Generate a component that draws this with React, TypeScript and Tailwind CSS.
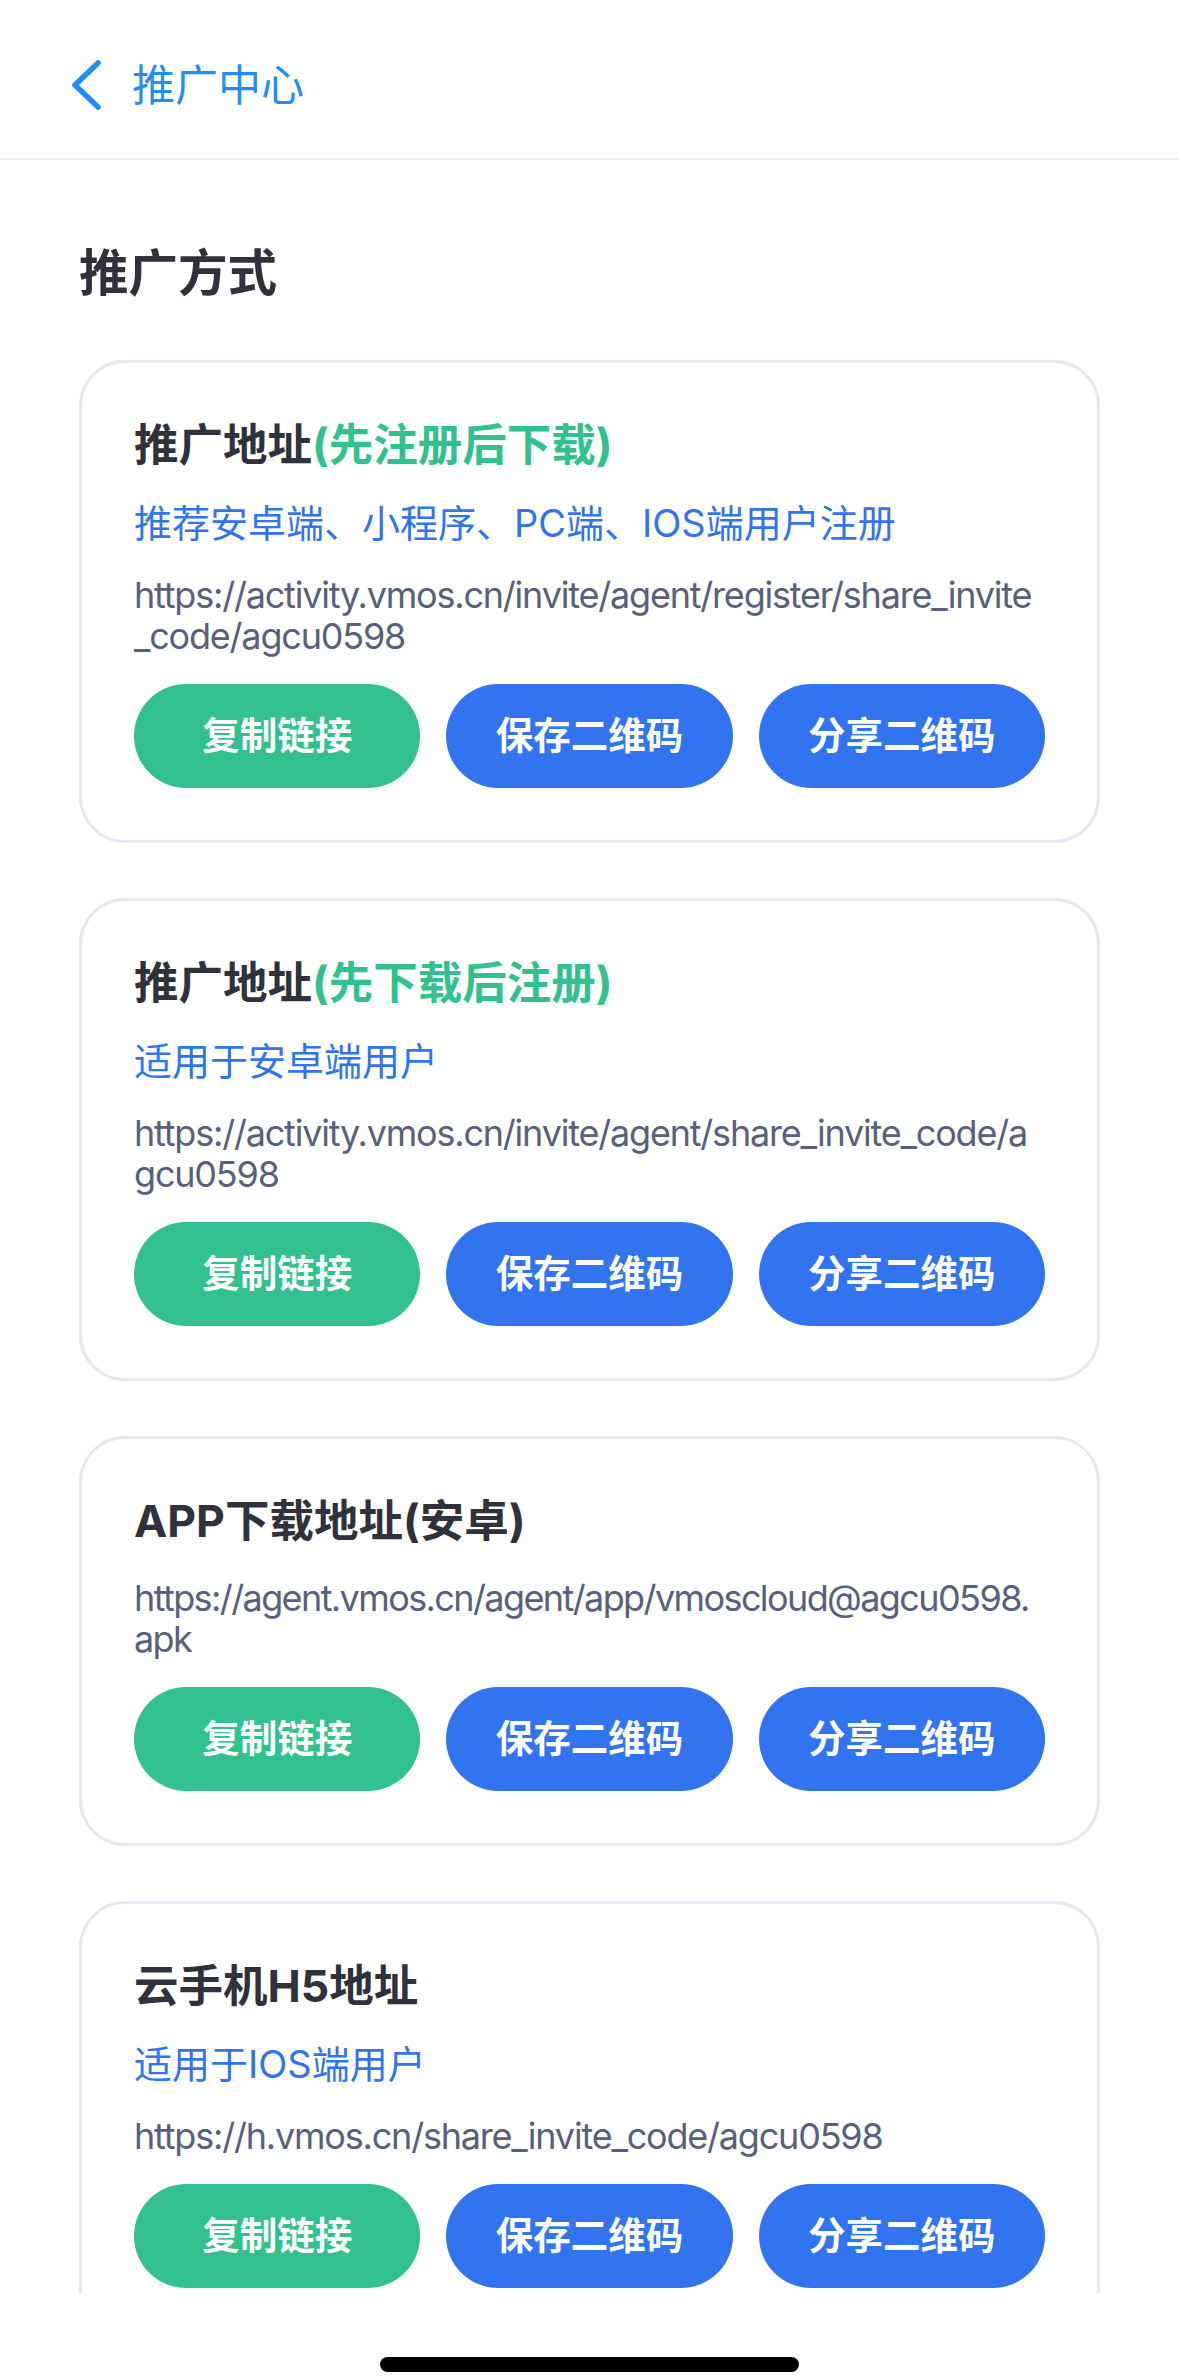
import React from 'react'

type Item = {
  title: string
  tag?: string
  desc?: string
  url: string
  tight?: boolean
}

const items: Item[] = [
  {
    title: '推广地址',
    tag: '(先注册后下载)',
    desc: '推荐安卓端、小程序、PC端、IOS端用户注册',
    url: 'https://activity.vmos.cn/invite/agent/register/share_invite_code/agcu0598',
  },
  {
    title: '推广地址',
    tag: '(先下载后注册)',
    desc: '适用于安卓端用户',
    url: 'https://activity.vmos.cn/invite/agent/share_invite_code/agcu0598',
  },
  {
    title: 'APP下载地址(安卓)',
    url: 'https://agent.vmos.cn/agent/app/vmoscloud@agcu0598.apk',
    tight: true,
  },
  {
    title: '云手机H5地址',
    desc: '适用于IOS端用户',
    url: 'https://h.vmos.cn/share_invite_code/agcu0598',
  },
]

function ActionButton({ label, green }: { label: string; green?: boolean }) {
  return (
    <button
      className={`flex h-[104px] items-center justify-center rounded-full text-[37.5px] font-bold text-white ${
        green ? 'bg-[#32c08e]' : 'bg-[#3273f0]'
      }`}
    >
      {label}
    </button>
  )
}

function PromoCard({ item }: { item: Item }) {
  return (
    <div className="rounded-[46px] border-[3px] border-[#e6e8f2] bg-white p-[52px]">
      <h3 className="text-[44.5px] leading-[60px] font-bold text-[#30313b]">
        {item.title}
        {item.tag && <span className="text-[#32c08e]">{item.tag}</span>}
      </h3>
      {item.desc && (
        <p className="mt-[23px] text-[38px] leading-[50px] text-[#3273f0]">{item.desc}</p>
      )}
      <p
        className={`mt-[27px] text-[36px] leading-[41px] break-all text-[#596079] ${
          item.tight ? 'tracking-[-1.6px]' : 'tracking-[-1.2px]'
        }`}
      >
        {item.url}
      </p>
      <div className="mt-[27px] grid grid-cols-3 gap-[26px]">
        <ActionButton label="复制链接" green />
        <ActionButton label="保存二维码" />
        <ActionButton label="分享二维码" />
      </div>
    </div>
  )
}

export default function App() {
  return (
    <div className="flex h-[2377px] w-full flex-col overflow-hidden bg-white font-[Inter,'Noto_Sans_CJK_SC',sans-serif]">
      {/* Nav bar */}
      <header className="flex h-[160px] shrink-0 items-center border-b-2 border-[#ededf3] pt-[12px] pl-[72px]">
        <svg width="30" height="50" viewBox="0 0 30 50" fill="none">
          <path
            d="M26 3 L3 25 L26 47"
            stroke="#1f8ef9"
            strokeWidth="5.5"
            strokeLinecap="round"
            strokeLinejoin="round"
          />
        </svg>
        <span className="ml-[30px] text-[43px] text-[#1f8ef9]">推广中心</span>
      </header>

      {/* Content */}
      <main className="flex-1 overflow-hidden px-[79px] pt-[80px]">
        <h2 className="mb-[53px] text-[49.5px] leading-[67px] font-bold text-[#30313b]">推广方式</h2>
        <div className="flex flex-col gap-[55px]">
          {items.map((item, i) => (
            <PromoCard key={i} item={item} />
          ))}
        </div>
      </main>

      {/* Home indicator */}
      <div className="flex h-[84px] shrink-0 justify-center pt-[64px]">
        <div className="h-[15px] w-[419px] rounded-full bg-black" />
      </div>
    </div>
  )
}
